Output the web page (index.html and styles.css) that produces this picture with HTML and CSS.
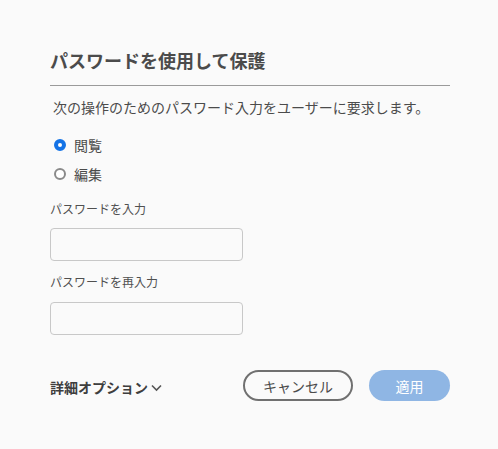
FILE: index.html
```html
<!DOCTYPE html>
<html lang="ja">
<head>
<meta charset="utf-8">
<link rel="stylesheet" href="styles.css">
</head>
<body>
<div class="dialog">
  <h1 class="title">パスワードを使用して保護</h1>
  <div class="rule"></div>
  <p class="desc">次の操作のためのパスワード入力をユーザーに要求します。</p>
  <div class="radios">
    <label class="radio"><span class="dot checked"></span><span>閲覧</span></label>
    <label class="radio"><span class="dot"></span><span>編集</span></label>
  </div>
  <div class="field">
    <div class="label">パスワードを入力</div>
    <div class="input"></div>
  </div>
  <div class="field">
    <div class="label">パスワードを再入力</div>
    <div class="input"></div>
  </div>
  <div class="footer">
    <div class="more">詳細オプション<svg class="chev" width="11" height="8" viewBox="0 0 11 8"><path d="M1 1.5 L5.5 6 L10 1.5" fill="none" stroke="#555" stroke-width="1.6"/></svg></div>
    <div class="buttons">
      <div class="btn cancel">キャンセル</div>
      <div class="btn apply">適用</div>
    </div>
  </div>
</div>
</body>
</html>
```
FILE: styles.css
```css
html, body {
  margin: 0;
  padding: 0;
  background: #fafafa;
}
body {
  font-family: "Noto Sans CJK JP", "Noto Sans", sans-serif;
  color: #4b4b4b;
}
.dialog {
  width: 400px;
  padding: 46px 48px 0 50px;
}
.title {
  margin: 0;
  font-size: 18px;
  font-weight: 700;
  line-height: 28px;
  color: #4b4b4b;
}
.rule {
  margin-top: 11px;
  height: 1px;
  background: #9a9a9a;
}
.desc {
  margin: 10px 0 0 3px;
  font-size: 14px;
  line-height: 22px;
  color: #4b4b4b;
}
.radios {
  margin-top: 16px;
  display: flex;
  flex-direction: column;
  gap: 7px;
}
.radio {
  display: flex;
  align-items: center;
  gap: 8px;
  font-size: 14px;
  line-height: 22px;
  padding-left: 4px;
}
.dot {
  width: 8px;
  height: 8px;
  border: 2px solid #8a8a8a;
  border-radius: 50%;
  background: #fff;
}
.dot.checked {
  border: 4px solid #1473e6;
  width: 4px;
  height: 4px;
}
.field {
  margin-top: 12px;
}
.radios + .field {
  margin-top: 15px;
}
.label {
  font-size: 12px;
  line-height: 18px;
  color: #505050;
}
.input {
  margin-top: 10px;
  width: 191px;
  height: 31px;
  border: 1px solid #c8c8c8;
  border-radius: 4px;
  background: #fafafa;
}
.field + .field .input {
  margin-top: 11px;
}
.footer {
  margin-top: 35px;
  display: flex;
  align-items: center;
  justify-content: space-between;
}
.more {
  display: flex;
  align-items: center;
  gap: 3px;
  font-size: 14px;
  font-weight: 700;
  color: #3e3e3e;
  padding-top: 3px;
}
.chev {
  margin-top: 1px;
}
.buttons {
  display: flex;
  gap: 16px;
}
.btn {
  height: 31px;
  border-radius: 16px;
  display: flex;
  align-items: center;
  justify-content: center;
  font-size: 14px;
  box-sizing: border-box;
}
.cancel {
  width: 110px;
  border: 2px solid #707070;
  color: #4b4b4b;
}
.apply {
  width: 81px;
  background: #8fb6e4;
  color: #fff;
}
```
